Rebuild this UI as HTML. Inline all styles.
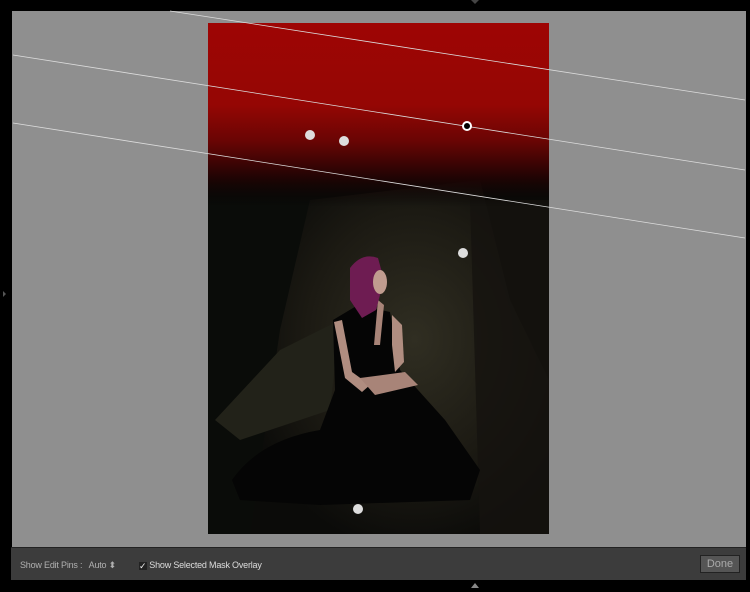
<!DOCTYPE html><html><head><style>
body{margin:0;width:750px;height:592px;background:#000;overflow:hidden;font-family:"Liberation Sans",sans-serif}
.bar{position:absolute;left:11px;top:547px;width:735px;height:32px;background:#3c3c3c;border-top:1px solid #222}
.t{position:absolute;top:12px;font-size:9px;color:#b0b0b0;letter-spacing:-0.2px}
.done{position:absolute;right:6px;top:7px;width:38px;height:16px;background:#555;border:1px solid #222;color:#aaa;font-size:11px;text-align:center;line-height:16px}
</style></head><body>
<svg width="750" height="592" style="position:absolute;left:0;top:0">
<defs>
<linearGradient id="red" x1="0" y1="0" x2="0" y2="1">
<stop offset="0" stop-color="#9e0504"/><stop offset="0.16" stop-color="#950604"/><stop offset="0.23" stop-color="#6a0504"/><stop offset="0.3" stop-color="#230404"/><stop offset="0.36" stop-color="#000" stop-opacity="0"/></linearGradient>
<radialGradient id="tree" cx="0.55" cy="0.45" r="0.6"><stop offset="0" stop-color="#302e22"/><stop offset="0.6" stop-color="#1c1a13"/><stop offset="1" stop-color="#0b0b09"/></radialGradient>
</defs>
<rect x="12" y="11" width="734" height="536" fill="#8f8f8f"/>
<rect x="208" y="23" width="341" height="511" fill="#0a0c09"/>
<path d="M250 534 L280 330 L310 200 L480 180 L510 300 L549 380 L549 534 Z" fill="url(#tree)"/>
<path d="M215 420 L280 350 L340 320 L330 410 L240 440 Z" fill="#222219"/>
<path d="M470 200 L549 200 L549 534 L480 534 Z" fill="#15130f" opacity="0.8"/>
<rect x="208" y="23" width="341" height="511" fill="url(#red)"/>
<path d="M232 480 Q260 440 320 430 L335 390 L333 320 L358 305 L390 312 L400 370 L445 420 L480 470 L470 500 L320 505 L240 500 Z" fill="#050505"/>
<path d="M334 322 L342 320 L352 372 L370 385 L362 392 L345 378 Z" fill="#b08d80"/>
<path d="M392 315 L402 325 L404 362 L395 372 L392 345 Z" fill="#b08d80"/>
<path d="M360 378 L405 372 L418 385 L375 395 Z" fill="#a88478"/>
<path d="M378 300 L384 305 L380 345 L374 345 Z" fill="#a88478"/>
<path d="M350 268 Q362 252 378 258 L384 280 L376 310 L362 318 L350 300 Z" fill="#6e1c52"/>
<ellipse cx="380" cy="282" rx="7" ry="12" fill="#c09c8f"/>
<line x1="170" y1="11" x2="745" y2="100" stroke="#ddd" stroke-width="0.8"/>
<line x1="13" y1="55" x2="745" y2="170" stroke="#ddd" stroke-width="0.8"/>
<line x1="13" y1="123" x2="745" y2="238" stroke="#ddd" stroke-width="0.8"/>
<g fill="#ddd"><circle cx="310" cy="135" r="5"/><circle cx="344" cy="141" r="5"/><circle cx="463" cy="253" r="5"/><circle cx="358" cy="509" r="5"/></g>
<circle cx="467" cy="126" r="5" fill="#fff"/><circle cx="467" cy="126" r="3" fill="#000"/>
<path d="M471 0 L479 0 L475 4 Z" fill="#444"/>
<path d="M471 588 L479 588 L475 583 Z" fill="#888"/>
<path d="M3 291 L6 294 L3 297 Z" fill="#555"/>
</svg>
<div class="bar">
<span class="t" style="left:9px">Show Edit Pins : <span style="margin-left:4px">Auto ⬍</span></span>
<span class="t" style="left:128px;color:#ddd"><span style="display:inline-block;width:8px;height:8px;background:#222;color:#eee;font-size:9px;line-height:8px;vertical-align:-1px">✓</span> Show Selected Mask Overlay</span>
<div class="done">Done</div>
</div>
</body></html>
